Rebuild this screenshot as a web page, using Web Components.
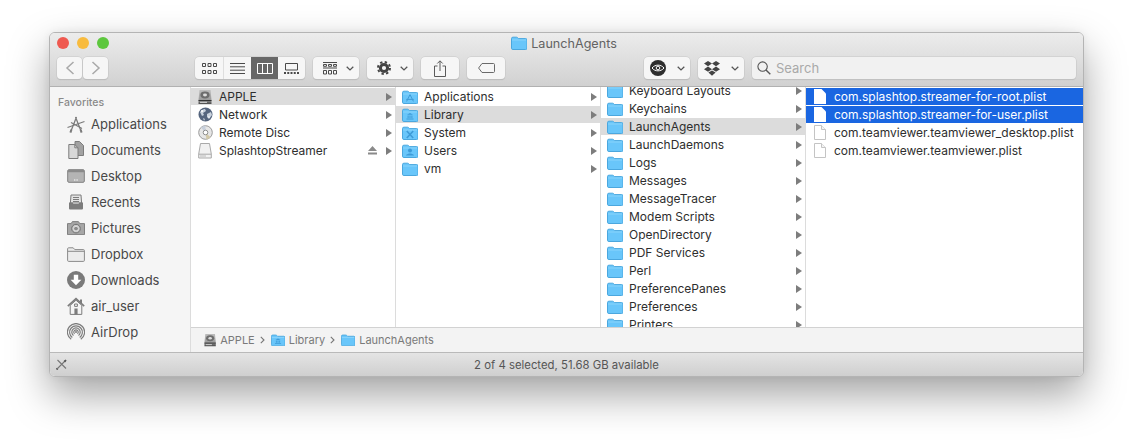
<!DOCTYPE html>
<html>
<head>
<meta charset="utf-8">
<style>
  html, body { margin: 0; height: 100%; background: #fff; overflow: hidden; }
  body { padding: 32px 48px 0 49px; box-sizing: border-box; font-family: Inter, "Liberation Sans", sans-serif; }
</style>
</head>
<body>
<finder-window title="LaunchAgents">
  <finder-sidebar slot="sidebar" heading="Favorites">
    <side-item icon="apps">Applications</side-item>
    <side-item icon="docs">Documents</side-item>
    <side-item icon="desktop">Desktop</side-item>
    <side-item icon="recents">Recents</side-item>
    <side-item icon="camera">Pictures</side-item>
    <side-item icon="folderline">Dropbox</side-item>
    <side-item icon="download">Downloads</side-item>
    <side-item icon="home">air_user</side-item>
    <side-item icon="airdrop">AirDrop</side-item>
  </finder-sidebar>

  <finder-column slot="columns">
    <col-row icon="hdd" arrow active>APPLE</col-row>
    <col-row icon="globe" arrow>Network</col-row>
    <col-row icon="disc" arrow>Remote Disc</col-row>
    <col-row icon="drive" arrow eject>SplashtopStreamer</col-row>
  </finder-column>
  <finder-column slot="columns">
    <col-row icon="folder-apps" arrow>Applications</col-row>
    <col-row icon="folder-lib" arrow active>Library</col-row>
    <col-row icon="folder-sys" arrow>System</col-row>
    <col-row icon="folder-users" arrow>Users</col-row>
    <col-row icon="folder" arrow>vm</col-row>
  </finder-column>
  <finder-column slot="columns" offset="6">
    <col-row icon="folder" arrow>Keyboard Layouts</col-row>
    <col-row icon="folder" arrow>Keychains</col-row>
    <col-row icon="folder" arrow active>LaunchAgents</col-row>
    <col-row icon="folder" arrow>LaunchDaemons</col-row>
    <col-row icon="folder" arrow>Logs</col-row>
    <col-row icon="folder" arrow>Messages</col-row>
    <col-row icon="folder" arrow>MessageTracer</col-row>
    <col-row icon="folder" arrow>Modem Scripts</col-row>
    <col-row icon="folder" arrow>OpenDirectory</col-row>
    <col-row icon="folder" arrow>PDF Services</col-row>
    <col-row icon="folder" arrow>Perl</col-row>
    <col-row icon="folder" arrow>PreferencePanes</col-row>
    <col-row icon="folder" arrow>Preferences</col-row>
    <col-row icon="folder" arrow>Printers</col-row>
  </finder-column>
  <finder-column slot="columns" last>
    <col-row icon="file" selected>com.splashtop.streamer-for-root.plist</col-row>
    <col-row icon="file" selected>com.splashtop.streamer-for-user.plist</col-row>
    <col-row icon="file">com.teamviewer.teamviewer_desktop.plist</col-row>
    <col-row icon="file">com.teamviewer.teamviewer.plist</col-row>
  </finder-column>

  <finder-path slot="path">
    <path-item icon="hdd">APPLE</path-item>
    <path-item icon="folder-lib" sep>Library</path-item>
    <path-item icon="folder" sep>LaunchAgents</path-item>
  </finder-path>

  <span slot="status">2 of 4 selected, 51.68 GB available</span>
</finder-window>

<script>
const blueLine = '#4ba7de';
const folderBase = `<path d="M.5 2.6C.5 1.7 1 1.2 1.9 1.2h3.6c.5 0 .7.1 1 .4l1 1h7.1c.9 0 1.4.5 1.4 1.3v8.3c0 .9-.5 1.3-1.4 1.3H1.9c-.9 0-1.4-.4-1.4-1.3z" fill="#69c6fa" stroke="${blueLine}"/><path d="M1 4h14" stroke="#8ad4fb" stroke-width="1"/>`;

const icons = {
  folder: [16, 14, folderBase],
  'folder-apps': [16, 14, folderBase + `<path d="M8 4.6 4.6 11.4M8 4.6l3.4 6.8M4.2 9.4h7.6" stroke="#3e9bd8" fill="none"/>`],
  'folder-lib': [16, 14, folderBase + `<path d="M4.5 11.5h7v-1h-7zM5 6.8h6L8 5zM5.6 7.5h1v2.6h-1zM7.5 7.5h1v2.6h-1zM9.4 7.5h1v2.6h-1z" fill="#3e9bd8"/>`],
  'folder-sys': [16, 14, folderBase + `<path d="M4.8 5 11.2 12M11.2 5 4.8 12" stroke="#3e9bd8" stroke-width="1.6" fill="none"/>`],
  'folder-users': [16, 14, folderBase + `<circle cx="8" cy="6.6" r="2" fill="#3e9bd8"/><path d="M4 11.6c0-1.5 2-1.6 2.8-2.2h2.4c.8.6 2.8.7 2.8 2.2z" fill="#3e9bd8"/>`],
  file: [12, 15, `<path d="M.5.5h7l4 4v10H.5z" fill="#fff" stroke="#c4c4c4"/><path d="M7.5.5v4h4" fill="#f4f4f4" stroke="#c4c4c4"/>`],
  'file-sel': [12, 15, `<path d="M0 0h7.5L12 4.5V15H0z" fill="#fff"/>`],
  hdd: [14, 16, `<defs><linearGradient id="h" x1="0" y1="0" x2="0" y2="1"><stop offset="0" stop-color="#bdbdbd"/><stop offset=".7" stop-color="#9c9c9c"/><stop offset="1" stop-color="#4a4a4a"/></linearGradient></defs><path d="M1.5 1h11l1 10v4H.5v-4z" fill="url(#h)"/><ellipse cx="7" cy="6" rx="4.6" ry="3.4" fill="#6d6d6d"/><ellipse cx="7" cy="6" rx="2" ry="1.4" fill="#dcdcdc"/><path d="M.5 11.5h13" stroke="#333"/><path d="M2 13.3h7" stroke="#ddd"/>`],
  globe: [15, 15, `<circle cx="7.5" cy="7.5" r="7" fill="#55657e"/><path d="M2 5c2-2 3-3 5-3l1 2-3 2 1 2-2 1zM9 7l4-2 1 3-3 4-2-2zM5 11l2 1-1 2z" fill="#c9d2dd"/><circle cx="4" cy="4" r="1" fill="#fff"/><circle cx="11" cy="10" r=".8" fill="#fff"/>`],
  disc: [15, 15, `<circle cx="7.5" cy="7.5" r="6.8" fill="#e6e6e6" stroke="#9a9a9a"/><path d="M7.5 7.5 3 2.5A6.8 6.8 0 0 1 7.5.8z" fill="#c6cfdc"/><path d="M7.5 7.5l5 4.8a6.8 6.8 0 0 1-4 2.2z" fill="#d2c8a8"/><circle cx="7.5" cy="7.5" r="2.3" fill="#fff" stroke="#8c8c8c"/>`],
  drive: [14, 16, `<path d="M2.5.5h9l1.8 10.5v4H.7V11z" fill="#f1f1f1" stroke="#a9a9a9"/><path d="M1 11.2h12" stroke="#a9a9a9"/><path d="M2 13h6" stroke="#bbb"/>`],
  apps: [18, 17, `<path d="M9.5 1 4 15M8.5 1 14 15" stroke="#7c7c7c" stroke-width="1.3" fill="none"/><path d="M.5 11.5 9 8.5l8.500-3M4 6.500l11 6" stroke="#7c7c7c" stroke-width="1.2" fill="none"/><path d="M3.4 16.6l1-3M14.600 16.600l-1-3" stroke="#7c7c7c" stroke-width="2"/>`],
  docs: [16, 18, `<path d="M7 .5h4.5l4 4v10H7z" fill="#a2a2a2" stroke="#7c7c7c"/><path d="M.8 3.5h6l3.2 3.3v10.7H.8z" fill="#d8d8d8" stroke="#7c7c7c"/><path d="M6.8 3.5v3.3H10" fill="none" stroke="#7c7c7c"/>`],
  desktop: [18, 14, `<rect x=".7" y=".7" width="16.6" height="12.6" rx="1.2" fill="#b4b4b4" stroke="#808080"/><path d="M1 1h16v2.2H1z" fill="#8a8a8a"/><path d="M7 11h4" stroke="#fff" stroke-dasharray="1 .6" stroke-width="1.2"/>`],
  recents: [16, 16, `<path d="M3 1h10l.6 8H2.4z" fill="#e4e4e4" stroke="#7c7c7c"/><path d="M5 3.5h6M5 5.5h6M5 7.5h6" stroke="#7c7c7c"/><path d="M1 8.5h3.6l.8 1.6h5.2l.8-1.6H15v6a1 1 0 0 1-1 1H2a1 1 0 0 1-1-1z" fill="#7c7c7c"/>`],
  camera: [18, 14, `<path d="M.5 2.6h3.7L5.4.6h6l1.4 2h4.7v11H.5z" fill="#a6a6a6" stroke="#808080"/><circle cx="9" cy="7.6" r="4.3" fill="#c8c8c8" stroke="#6f6f6f"/><circle cx="9" cy="7.6" r="2.4" fill="#8c8c8c" stroke="#e2e2e2"/>`],
  folderline: [18, 15, `<path d="M.6 13.4V1.8c0-.6.4-1 1-1h4.6l1.6 1.8h8.6c.7 0 1 .4 1 1v9.800c0 .6-.3 1-1 1H1.600c-.6 0-1-.4-1-1z" fill="#ececec" stroke="#8a8a8a"/><path d="M.8 4.3h16.4" stroke="#8a8a8a"/>`],
  download: [18, 18, `<circle cx="9" cy="9" r="9" fill="#7a7a7a"/><path d="M6.8 3.8h4.4v5h3.2L9 14.2 3.6 8.8h3.2z" fill="#fff"/>`],
  home: [18, 18, `<path d="M.8 9.2 9 1.6l8.2 7.6" fill="none" stroke="#7c7c7c" stroke-width="1.6"/><path d="M13 2.5h2v4h-2z" fill="#7c7c7c"/><path d="M3.2 8.4v9h11.6v-9L9 3.2z" fill="#f4f4f4" stroke="#7c7c7c"/><path d="M7.4 11.5h3.2v6H7.4z" fill="#7c7c7c"/><path d="M7.6 7h2.8v2.4H7.6z" fill="none" stroke="#7c7c7c"/>`],
  airdrop: [18, 18, `<g fill="none" stroke="#7c7c7c" stroke-width="1.2"><path d="M4.2 16.3a8.6 8.6 0 1 1 9.6 0"/><path d="M5.3 14.5a6.4 6.4 0 1 1 7.4 0"/><path d="M6.5 12.5a4.2 4.2 0 1 1 5 0"/><path d="M7.6 10.8a2.2 2.2 0 1 1 2.8 0"/></g><circle cx="9" cy="9" r="1" fill="#7c7c7c"/>`],
  back: [10, 14, `<path d="M8.5 1 2 7l6.5 6" fill="none" stroke="#a9a9a9" stroke-width="1.5"/>`],
  forward: [10, 14, `<path d="M1.5 1 8 7l-6.5 6" fill="none" stroke="#a9a9a9" stroke-width="1.5"/>`],
  grid: [15, 11, `<path d="M.5.5h3v3h-3zM6 .5h3v3H6zM11.5.5h3v3h-3zM.5 7.5h3v3h-3zM6 7.5h3v3H6zM11.5 7.5h3v3h-3z" fill="none" stroke="#4a4a4a"/>`],
  list: [15, 11, `<path d="M0 .5h15M0 3.8h15M0 7.2h15M0 10.5h15" stroke="#4a4a4a"/>`],
  cols: [16, 11, `<path d="M.5.5h15v10H.5zM5.5.5v10M10.5.5v10" fill="none" stroke="#fff"/>`],
  gallery: [15, 11, `<path d="M1.5.5h12V7h-12z" fill="none" stroke="#4a4a4a"/><path d="M0 10h15" stroke="#4a4a4a" stroke-width="2" stroke-dasharray="2 1.25"/>`],
  arrange: [14, 13, `<path d="M0 .5h14M0 6h14" stroke="#4a4a4a"/><path d="M.5 2.5h3v1.800h-3zM5.5 2.5h3v1.800h-3zM10.5 2.5h3v1.800h-3zM.5 8.5h3V12h-3zM5.5 8.5h3V12h-3zM10.5 8.5h3V12h-3z" fill="none" stroke="#4a4a4a"/>`],
  gear: [14, 14, `<circle cx="7" cy="7" r="3.6" fill="none" stroke="#444" stroke-width="3"/><circle cx="7" cy="7" r="6" fill="none" stroke="#444" stroke-width="2" stroke-dasharray="2.35 2.36"/>`],
  share: [12, 17, `<path d="M3.5 6H.5v10.5h11V6H8.5" fill="none" stroke="#5a5a5a"/><path d="M6 11V1M3.3 3.5 6 .8l2.7 2.7" fill="none" stroke="#5a5a5a"/>`],
  tag: [17, 10, `<path d="M4 .5h11.5c.6 0 1 .4 1 1v7c0 .6-.4 1-1 1H4L.6 5z" fill="none" stroke="#6a6a6a"/>`],
  eye: [16, 16, `<circle cx="8" cy="8" r="8" fill="#2e2e2e"/><path d="M2 8c3-3.8 9-3.8 12 0-3 3.8-9 3.8-12 0z" fill="none" stroke="#fff"/><circle cx="8" cy="8" r="1.8" fill="none" stroke="#fff"/>`],
  dropbox: [16, 15, `<path d="M4 0l4 2.6-4 2.600L0 2.600zM12 0l4 2.600-4 2.600-4-2.600zM4 5.600l4 2.600-4 2.600-4-2.600zM12 5.600l4 2.600-4 2.600-4-2.600zM8 9.400l3.600 2.200L8 14.800l-3.600-3.200z" fill="#444"/>`],
  search: [14, 14, `<circle cx="5.6" cy="5.6" r="4.7" fill="none" stroke="#555" stroke-width="1.1"/><path d="M9 9l4.3 4.3" stroke="#555" stroke-width="1.4"/>`],
  tools: [11, 11, `<path d="M1 10 9.5 1.500M1.500 1 10 9.500" stroke="#777" stroke-width="1.1"/><path d="M7.600 2l2-1.500 1 1-1.500 2zM.3 8.800l2 2-1.300.2-1-1z" fill="#555"/>`],
  chevron: [8, 5, `<path d="M.7.7 4 3.900 7.300.7" fill="none" stroke="#555" stroke-width="1.3"/>`],
};

class FinderIcon extends HTMLElement {
  connectedCallback() {
    const [w, h, body] = icons[this.getAttribute('name')] || icons.folder;
    const scale = parseFloat(this.getAttribute('scale')) || 1;
    this.attachShadow({ mode: 'open' });
    this.shadowRoot.innerHTML = `
      <style>:host { display: inline-flex; flex: none; } svg { display: block; }</style>
      <svg width="${w * scale}" height="${h * scale}" viewBox="0 0 ${w} ${h}">${body}</svg>`;
  }
}
customElements.define('finder-icon', FinderIcon);

class TrafficLights extends HTMLElement {
  constructor() {
    super();
    this.attachShadow({ mode: 'open' });
    this.shadowRoot.innerHTML = `
      <style>
        :host { display: flex; gap: 8px; }
        i { width: 12px; height: 12px; border-radius: 50%; display: block; }
      </style>
      <i style="background:#ef5950"></i><i style="background:#f8bb3e"></i><i style="background:#5dc73e"></i>`;
  }
}
customElements.define('traffic-lights', TrafficLights);

class ToolBtn extends HTMLElement {
  constructor() {
    super();
    this.attachShadow({ mode: 'open' });
  }
  connectedCallback() {
    const w = this.getAttribute('w') || 38;
    const menu = this.hasAttribute('menu');
    const pad = this.getAttribute('pad') || 10;
    this.shadowRoot.innerHTML = `
      <style>
        :host {
          display: flex; align-items: center; justify-content: ${menu ? 'space-between' : 'center'};
          box-sizing: border-box; height: 22px; width: ${w}px;
          padding: ${menu ? `0 5px 0 ${pad}px` : '0'};
          background: #f6f6f6; border-radius: 4px;
          box-shadow: 0 0 0 .5px #c6c6c6, 0 1px 1px rgba(0,0,0,.16);
        }
      </style>
      <finder-icon name="${this.getAttribute('icon')}"></finder-icon>
      ${menu ? '<finder-icon name="chevron"></finder-icon>' : ''}`;
  }
}
customElements.define('tool-btn', ToolBtn);

class ViewSwitch extends HTMLElement {
  constructor() {
    super();
    this.attachShadow({ mode: 'open' });
    this.shadowRoot.innerHTML = `
      <style>
        :host {
          display: flex; height: 22px; width: 110px; border-radius: 4px; overflow: hidden;
          background: #f6f6f6; box-shadow: 0 0 0 .5px #c6c6c6, 0 1px 1px rgba(0,0,0,.16);
        }
        div { width: 27px; box-sizing: border-box; display: flex; align-items: center; justify-content: center; }
        .wide { width: 28px; }
        .wide + .wide { border-left: 1px solid #dedede; }
        .on { background: #676767; }
      </style>
      <div class="wide"><finder-icon name="grid"></finder-icon></div>
      <div class="wide"><finder-icon name="list"></finder-icon></div>
      <div class="on"><finder-icon name="cols"></finder-icon></div>
      <div><finder-icon name="gallery"></finder-icon></div>`;
  }
}
customElements.define('view-switch', ViewSwitch);

class SearchField extends HTMLElement {
  constructor() {
    super();
    this.attachShadow({ mode: 'open' });
    this.shadowRoot.innerHTML = `
      <style>
        :host {
          display: flex; align-items: center; gap: 5px; flex: 1; height: 22px;
          box-sizing: border-box; padding-left: 5px; border-radius: 4px; background: #f1f1f1;
          box-shadow: 0 0 0 .5px #c6c6c6, 0 1px 1px rgba(0,0,0,.12);
          font-size: 13px; color: #a9a9a9;
        }
      </style>
      <finder-icon name="search"></finder-icon><span>Search</span>`;
  }
}
customElements.define('search-field', SearchField);

class FinderWindow extends HTMLElement {
  constructor() {
    super();
    this.attachShadow({ mode: 'open' });
  }
  connectedCallback() {
    this.shadowRoot.innerHTML = `
      <style>
        :host {
          display: flex; flex-direction: column; box-sizing: border-box;
          width: 1035px; height: 345px; border-radius: 6px; overflow: hidden;
          border: 1px solid #b4b4b4; background: #fff;
          box-shadow: 0 18px 40px rgba(0,0,0,.36), 0 0 8px rgba(0,0,0,.06);
        }
        header {
          height: 54px; flex: none; box-sizing: border-box;
          background: linear-gradient(#ececec, #d1d1d1); border-bottom: 1px solid #b1b1b1;
          padding: 0 7px;
        }
        .top { display: flex; align-items: center; height: 20px; }
        traffic-lights { width: 52px; }
        .title {
          flex: 1; display: flex; justify-content: center; align-items: center; gap: 4px;
          font-size: 12.6px; color: #636363; padding-right: 57px;
        }
        .tools { display: flex; align-items: center; margin-top: 4px; }
        .nav { display: flex; gap: 1px; margin-right: 87px; }
        .main { flex: 1; display: flex; min-height: 0; }
        .side { width: 141px; flex: none; display: flex; }
        .right { flex: 1; min-width: 0; display: flex; flex-direction: column; }
        .cols { flex: 1; display: flex; min-height: 0; }
        footer {
          height: 23px; flex: none; display: flex; align-items: center; justify-content: center;
          background: linear-gradient(#e4e4e4, #cfcfcf); border-top: 1px solid #b9b9b9;
          font-size: 11.35px; color: #555; position: relative;
        }
        footer finder-icon { position: absolute; left: 6px; top: 6px; }
      </style>
      <header>
        <div class="top">
          <traffic-lights></traffic-lights>
          <div class="title"><finder-icon name="folder"></finder-icon><span>${this.getAttribute('title')}</span></div>
        </div>
        <div class="tools">
          <div class="nav"><tool-btn icon="back" w="25"></tool-btn><tool-btn icon="forward" w="25"></tool-btn></div>
          <view-switch></view-switch>
          <tool-btn icon="arrange" w="46" menu style="margin-left:8px"></tool-btn>
          <tool-btn icon="gear" w="46" menu style="margin-left:8px"></tool-btn>
          <tool-btn icon="share" style="margin-left:8px"></tool-btn>
          <tool-btn icon="tag" style="margin-left:8px"></tool-btn>
          <tool-btn icon="eye" w="46" pad="6" menu style="margin-left:139px"></tool-btn>
          <tool-btn icon="dropbox" w="46" pad="6" menu style="margin-left:8px"></tool-btn>
          <search-field style="margin-left:8px"></search-field>
        </div>
      </header>
      <div class="main">
        <div class="side"><slot name="sidebar"></slot></div>
        <div class="right">
          <div class="cols"><slot name="columns"></slot></div>
          <slot name="path"></slot>
        </div>
      </div>
      <footer><finder-icon name="tools"></finder-icon><slot name="status"></slot></footer>`;
  }
}
customElements.define('finder-window', FinderWindow);

class FinderSidebar extends HTMLElement {
  constructor() {
    super();
    this.attachShadow({ mode: 'open' });
  }
  connectedCallback() {
    this.shadowRoot.innerHTML = `
      <style>
        :host {
          display: block; flex: 1; box-sizing: border-box; background: #f5f5f5;
          border-right: 1px solid #dcdcdc; overflow: hidden;
        }
        h2 {
          margin: 0; padding: 8px 0 0 8px; height: 24px; box-sizing: border-box;
          font-size: 10.5px; line-height: 15px; font-weight: 500; color: #8a8a8a;
        }
      </style>
      <h2>${this.getAttribute('heading')}</h2>
      <slot></slot>`;
  }
}
customElements.define('finder-sidebar', FinderSidebar);

class SideItem extends HTMLElement {
  constructor() {
    super();
    this.attachShadow({ mode: 'open' });
  }
  connectedCallback() {
    this.shadowRoot.innerHTML = `
      <style>
        :host {
          display: flex; align-items: center; height: 26px; padding-left: 17px;
          font-size: 13px; color: #484848;
        }
        span { width: 18px; margin-right: 6px; display: flex; justify-content: center; }
      </style>
      <span><finder-icon name="${this.getAttribute('icon')}"></finder-icon></span><slot></slot>`;
  }
}
customElements.define('side-item', SideItem);

class FinderColumn extends HTMLElement {
  constructor() {
    super();
    this.attachShadow({ mode: 'open' });
  }
  connectedCallback() {
    const last = this.hasAttribute('last');
    const offset = this.getAttribute('offset') || 0;
    this.shadowRoot.innerHTML = `
      <style>
        :host {
          display: block; overflow: hidden; box-sizing: border-box; background: #fff;
          ${last ? 'flex: 1; min-width: 0;' : 'width: 205px; flex: none; border-right: 1px solid #dcdcdc;'}
        }
        .list { padding-top: 1px; margin-top: -${offset}px; }
      </style>
      <div class="list"><slot></slot></div>`;
  }
}
customElements.define('finder-column', FinderColumn);

class ColRow extends HTMLElement {
  constructor() {
    super();
    this.attachShadow({ mode: 'open' });
  }
  connectedCallback() {
    const selected = this.hasAttribute('selected');
    const icon = this.getAttribute('icon');
    const isFile = icon === 'file';
    this.shadowRoot.innerHTML = `
      <style>
        :host {
          display: flex; align-items: center; height: 17px; margin-bottom: 1px;
          font-size: 12px; color: #2e2e2e; white-space: nowrap;
        }
        :host([active]) { background: #dcdcdc; }
        :host([selected]) { background: #1a66e1; color: #fff; }
        .ic { width: ${isFile ? 12 : 16}px; margin: 0 ${isFile ? 8 : 6}px 0 ${isFile ? 8 : 6}px; display: flex; justify-content: center; flex: none; }
        .label { flex: 1; min-width: 0; }
        .eject { width: 9px; height: 9px; margin-right: 9px; display: flex; }
        .arrow {
          width: 0; height: 0; margin-right: 3px; flex: none;
          border-left: 6px solid #7d7d7d; border-top: 4px solid transparent; border-bottom: 4px solid transparent;
        }
      </style>
      <span class="ic"><finder-icon name="${selected ? 'file-sel' : icon}"></finder-icon></span>
      <span class="label"><slot></slot></span>
      ${this.hasAttribute('eject') ? '<svg class="eject" viewBox="0 0 9 9"><path d="M4.5 0 9 5H0zM0 6.5h9v2H0z" fill="#8a8a8a"/></svg>' : ''}
      ${this.hasAttribute('arrow') ? '<span class="arrow"></span>' : ''}`;
  }
}
customElements.define('col-row', ColRow);

class FinderPath extends HTMLElement {
  constructor() {
    super();
    this.attachShadow({ mode: 'open' });
    this.shadowRoot.innerHTML = `
      <style>
        :host {
          display: flex; align-items: center; flex: none; height: 25px; box-sizing: border-box;
          padding-left: 13px; background: #f3f3f3; border-top: 1px solid #d2d2d2;
          font-size: 11px; color: #7a7a7a;
        }
      </style>
      <slot></slot>`;
  }
}
customElements.define('finder-path', FinderPath);

class PathItem extends HTMLElement {
  constructor() {
    super();
    this.attachShadow({ mode: 'open' });
  }
  connectedCallback() {
    const sep = this.hasAttribute('sep');
    this.shadowRoot.innerHTML = `
      <style>
        :host { display: flex; align-items: center; }
        svg.sep { margin: 0 6px 0 5px; }
        finder-icon { margin-right: 4px; }
      </style>
      ${sep ? '<svg class="sep" width="5" height="8" viewBox="0 0 5 8"><path d="M.8.8 4 4 .8 7.2" fill="none" stroke="#777" stroke-width="1.1"/></svg>' : ''}
      <finder-icon name="${this.getAttribute('icon')}" scale=".875"></finder-icon><slot></slot>`;
  }
}
customElements.define('path-item', PathItem);
</script>
</body>
</html>
